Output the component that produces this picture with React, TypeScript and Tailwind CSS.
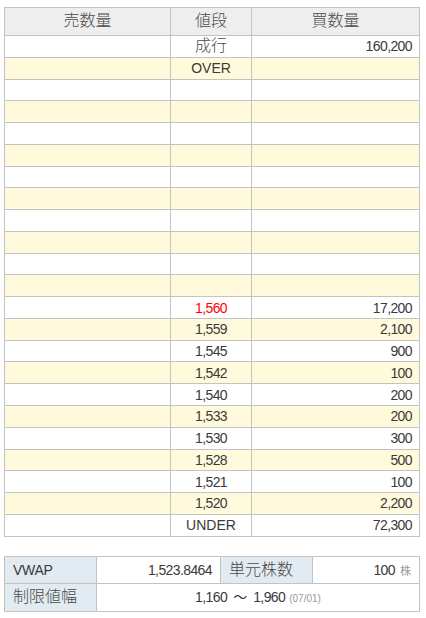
import React from 'react';

type Row = { price: string; qty: string; red?: boolean };

const rows: Row[] = [
  { price: '成行', qty: '160,200' },
  { price: 'OVER', qty: '' },
  ...Array.from({ length: 10 }, () => ({ price: '', qty: '' })),
  { price: '1,560', qty: '17,200', red: true },
  { price: '1,559', qty: '2,100' },
  { price: '1,545', qty: '900' },
  { price: '1,542', qty: '100' },
  { price: '1,540', qty: '200' },
  { price: '1,533', qty: '200' },
  { price: '1,530', qty: '300' },
  { price: '1,528', qty: '500' },
  { price: '1,521', qty: '100' },
  { price: '1,520', qty: '2,200' },
  { price: 'UNDER', qty: '72,300' },
];

const cell = 'border border-[#c3c3c3] p-0';
const isCjk = (s: string) => /[^\x00-\x7f]/.test(s);

export default function App() {
  return (
    <div className="bg-white w-[426px] h-[618px] pt-[7px] pl-[4px] text-[14px] text-[#3a3a3a] font-['Liberation_Sans','Noto_Sans_CJK_JP',sans-serif]">
      {/* 板 */}
      <table className="border-collapse table-fixed">
        <colgroup>
          <col className="w-[166px]" />
          <col className="w-[81px]" />
          <col className="w-[168px]" />
        </colgroup>
        <thead>
          <tr className="h-[28px] bg-[#eeeeee] text-[16px] leading-none text-[#4a4a4a]">
            <th className={`${cell} font-light pb-[1px]`}>売数量</th>
            <th className={`${cell} font-light pb-[1px]`}>値段</th>
            <th className={`${cell} font-light pb-[1px]`}>買数量</th>
          </tr>
        </thead>
        <tbody>
          {rows.map((r, i) => (
            <tr key={i} className={`h-[21.78px] leading-none ${i % 2 === 1 ? 'bg-[#fffadc]' : 'bg-white'}`}>
              <td className={cell}></td>
              <td
                className={`${cell} text-center ${r.red ? 'text-[#ff0000]' : ''} ${
                  isCjk(r.price) ? 'text-[16px] font-light text-[#4a4a4a]' : /\d/.test(r.price) ? 'tracking-[-0.6px]' : ''
                }`}
              >
                {r.price}
              </td>
              <td className={`${cell} text-right pr-[7px] tracking-[-0.6px]`}>{r.qty}</td>
            </tr>
          ))}
        </tbody>
      </table>

      {/* VWAP / 単元株数 / 制限値幅 */}
      <table className="border-collapse table-fixed mt-[19px]">
        <colgroup>
          <col className="w-[92px]" />
          <col className="w-[124px]" />
          <col className="w-[92px]" />
          <col className="w-[107px]" />
        </colgroup>
        <tbody>
          <tr className="h-[27.5px] leading-none">
            <td className={`${cell} bg-[#e2ebf2] pl-[8px] tracking-[-0.3px]`}>VWAP</td>
            <td className={`${cell} text-right pr-[8px] tracking-[-0.6px]`}>1,523.8464</td>
            <td className={`${cell} bg-[#e2ebf2] pl-[8px] text-[16px] font-light text-[#4a4a4a]`}>単元株数</td>
            <td className={`${cell} text-right pr-[8px]`}>
              <span className="tracking-[-0.6px]">100</span>
              <span className="ml-[5px] text-[11px] text-[#999]">株</span>
            </td>
          </tr>
          <tr className="h-[27.5px] leading-none">
            <td className={`${cell} bg-[#e2ebf2] pl-[8px] text-[16px] font-light text-[#4a4a4a]`}>制限値幅</td>
            <td colSpan={3} className={`${cell} text-center`}>
              <span className="tracking-[-0.6px]">1,160</span>
              <span className="mx-[6px]">〜</span>
              <span className="tracking-[-0.6px]">1,960</span>
              <span className="ml-[4px] text-[10px] text-[#999]">(07/01)</span>
            </td>
          </tr>
        </tbody>
      </table>
    </div>
  );
}
